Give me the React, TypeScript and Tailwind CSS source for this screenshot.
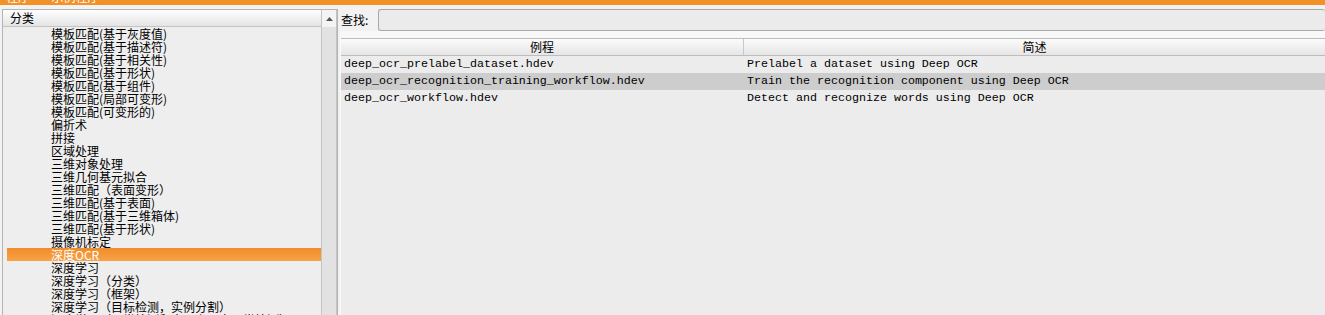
import React from "react";

const CATEGORIES = [
  "模板匹配(基于灰度值)",
  "模板匹配(基于描述符)",
  "模板匹配(基于相关性)",
  "模板匹配(基于形状)",
  "模板匹配(基于组件)",
  "模板匹配(局部可变形)",
  "模板匹配(可变形的)",
  "偏折术",
  "拼接",
  "区域处理",
  "三维对象处理",
  "三维几何基元拟合",
  "三维匹配（表面变形）",
  "三维匹配(基于表面)",
  "三维匹配(基于三维箱体)",
  "三维匹配(基于形状)",
  "摄像机标定",
  "深度OCR",
  "深度学习",
  "深度学习（分类）",
  "深度学习（框架）",
  "深度学习（目标检测，实例分割）",
  "深度学习（异常检测和全局上下文异常检测）",
];

const SELECTED = "深度OCR";

const ROWS = [
  { file: "deep_ocr_prelabel_dataset.hdev", desc: "Prelabel a dataset using Deep OCR" },
  { file: "deep_ocr_recognition_training_workflow.hdev", desc: "Train the recognition component using Deep OCR", active: true },
  { file: "deep_ocr_workflow.hdev", desc: "Detect and recognize words using Deep OCR" },
];

const CJK = "font-['Noto_Sans_CJK_SC','Noto_Sans',sans-serif]";
const MONO = "font-['Liberation_Mono','Noto_Sans_CJK_SC',monospace]";

export default function App() {
  return (
    <div className={`w-[1325px] h-[315px] overflow-hidden bg-[#f2f2f2] flex flex-col text-black ${CJK}`}>
      {/* title strip, mostly cut off */}
      <div className="h-[5px] shrink-0 overflow-hidden bg-[#f39129]">
        <div className="-mt-[10px] pl-[6px] text-[12px] leading-[14px] text-white whitespace-pre">
          程序        示例程序
        </div>
      </div>

      <div className="flex-1 flex min-h-0 pt-[4px]">
        {/* category tree */}
        <div className="ml-[2px] w-[336px] shrink-0 flex border border-[#b4b4b4] border-b-0 bg-[#eeeeee]">
          <div className="w-[318px] flex flex-col min-h-0">
            <div className="h-[17px] shrink-0 flex items-center pl-[7px] text-[12px] bg-gradient-to-b from-[#ffffff] to-[#e4e4e4] border-b border-[#c4c4c4]">
              分类
            </div>
            <div className="flex-1 overflow-hidden pl-[4px]">
              {CATEGORIES.map((c) => (
                <div
                  key={c}
                  className={
                    "h-[13px] leading-[13px] pl-[44px] text-[12px] whitespace-nowrap " +
                    (c === SELECTED ? "bg-gradient-to-b from-[#f08c28] to-[#f7a247] text-white" : "")
                  }
                >
                  {c}
                </div>
              ))}
            </div>
          </div>
          {/* scrollbar */}
          <div className="w-[16px] shrink-0 flex flex-col bg-[#e2e2e2] border-x border-[#c4c4c4]">
            <div className="h-[17px] flex items-center justify-center bg-[#f4f4f4]">
              <svg width="7" height="4" viewBox="0 0 7 4">
                <path d="M0 4 L3.5 0 L7 4 Z" fill="#555" />
              </svg>
            </div>
          </div>
        </div>

        {/* examples */}
        <div className="flex-1 flex flex-col min-w-0 ml-[2px]">
          <div className="h-[22px] shrink-0 flex items-center">
            <span className="w-[38px] pl-[1px] text-[12px] leading-none">查找:</span>
            <div className="flex-1 h-[22px] rounded-[3px] border border-[#a8a8a8] border-r-0 bg-[#ebebeb]" />
          </div>
          <div className="h-[7px] shrink-0 bg-[#f8f8f8]" />
          <div className="flex-1 flex flex-col border-l border-[#fafafa] bg-[#ececec]">
            <div className="h-[18px] shrink-0 flex text-[12px] bg-gradient-to-b from-[#fbfbfb] to-[#e6e6e6] border-y border-[#bdbdbd]">
              <div className="w-[403px] flex items-center justify-center border-r border-[#c8c8c8]">例程</div>
              <div className="flex-1 flex items-center justify-center">简述</div>
            </div>
            {ROWS.map((r) => (
              <div
                key={r.file}
                className={`h-[17px] flex items-center pt-[1px] text-[11.67px] whitespace-nowrap ${MONO} ${r.active ? "bg-[#cdcdcd]" : ""}`}
              >
                <div className="w-[403px] pl-[3px]">{r.file}</div>
                <div className="flex-1 pl-[3px]">{r.desc}</div>
              </div>
            ))}
          </div>
        </div>
      </div>
    </div>
  );
}
